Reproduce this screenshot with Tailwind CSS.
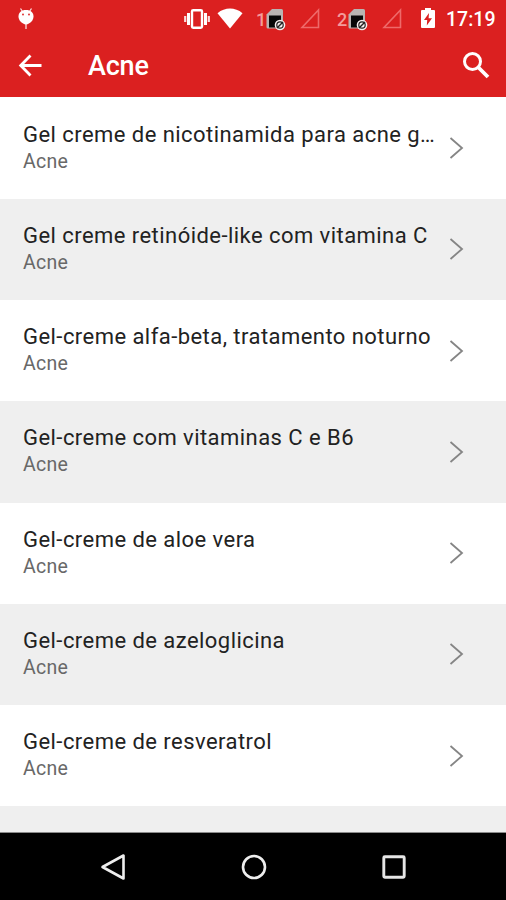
<!DOCTYPE html>
<html lang="pt">
<head>
<meta charset="utf-8">
<title>Acne</title>
<script src="https://cdn.jsdelivr.net/npm/@tailwindcss/browser@4"></script>
</head>
<body class="flex h-[900px] w-[506px] flex-col overflow-hidden bg-black font-['Roboto',sans-serif]">
<header class="h-[97px] shrink-0 bg-[#db2020] text-white">
  <div class="flex h-[37px] items-center pl-[17px] pr-[12px]">
    <svg class="mr-auto h-[23px] w-[18px]" viewBox="0 0 18 23" fill="none"><path d="M3.500 1.500l2 3M14.500 1.500l-2 3M9 16v6" stroke="#fff" stroke-opacity=".85" stroke-width="1.300"/><path d="M9 3C4.300 3 1.500 5.500 1.500 9.500C1.500 13.500 5 17 9 17.500C13 17 16.500 13.500 16.500 9.500C16.500 5.500 13.700 3 9 3z" fill="#fff"/><circle cx="6" cy="7.500" r=".9" fill="#db2020"/><circle cx="12" cy="7.500" r=".9" fill="#db2020"/></svg>
    <svg class="h-[24px] w-[28px]" viewBox="0 0 28 24" fill="none"><rect x="9" y="3.200" width="10" height="17.600" rx="1.200" stroke="#fff" stroke-width="2.400"/><path d="M5.500 6v12M22.500 6v12" stroke="#fff" stroke-width="3"/><path d="M2.200 9v6M25.800 9v6" stroke="#fff" stroke-opacity=".85" stroke-width="2.200"/></svg>
    <svg class="ml-[6px] h-[21px] w-[26px]" viewBox="0 0 26 21"><path d="M.500 5.200C8-1 18-1 25.500 5.200L13 20.500z" fill="#fff"/></svg>
    <span class="ml-[13px] mt-[3px] w-[10px] text-[18px] leading-none font-medium text-[#f49b9b]">1</span>
    <svg class="h-[24px] w-[20px]" viewBox="0 0 20 24"><path d="M6 2h9.500q1.500 0 1.500 1.500V20q0 1.500-1.500 1.500H2Q.500 21.500.500 20V7.500z" fill="#b9b4b2"/><path d="M3 8.500h12v12H3z" fill="#080808"/><circle cx="14" cy="18" r="5.300" fill="#f5eeee"/><circle cx="14" cy="18" r="3.200" fill="none" stroke="#222" stroke-width="1.200"/><path d="M11 21l6-6" stroke="#222" stroke-width="1.500"/></svg>
    <svg class="ml-[14px] h-[21px] w-[20px]" viewBox="0 0 20 21"><path d="M18.500 2v17.500H2z" fill="none" stroke="#ee6a6a" stroke-width="1.600"/></svg>
    <span class="ml-[17px] mt-[3px] w-[10px] text-[18px] leading-none font-medium text-[#f49b9b]">2</span>
    <svg class="ml-px h-[24px] w-[20px]" viewBox="0 0 20 24"><path d="M6 2h9.500q1.500 0 1.500 1.500V20q0 1.500-1.500 1.500H2Q.500 21.500.500 20V7.500z" fill="#b9b4b2"/><path d="M3 8.500h12v12H3z" fill="#080808"/><circle cx="14" cy="18" r="5.300" fill="#f5eeee"/><circle cx="14" cy="18" r="3.200" fill="none" stroke="#222" stroke-width="1.200"/><path d="M11 21l6-6" stroke="#222" stroke-width="1.500"/></svg>
    <svg class="ml-[14px] h-[21px] w-[20px]" viewBox="0 0 20 21"><path d="M18.500 2v17.500H2z" fill="none" stroke="#ee6a6a" stroke-width="1.600"/></svg>
    <svg class="ml-[19px] mb-[2px] h-[22px] w-[14px]" viewBox="0 0 14 22"><path d="M4 1h6v2h3q1 0 1 1v16q0 1-1 1H1q-1 0-1-1V4q0-1 1-1h3z" fill="#fff"/><path d="M8 6L3 13h3.200L5.800 18.500L11 11.200H7.600z" fill="#db2020"/></svg>
    <span class="ml-[11px] mt-[2px] w-[48px] text-[19.500px] leading-none font-medium whitespace-nowrap">17:19</span>
  </div>
  <div class="flex h-[56px] items-center pl-[18px] pr-[16px]">
    <svg class="h-[24px] w-[25px]" viewBox="0 0 25 24"><path d="M23.500 12.500H3M12.500 2.500L2.700 12.500l9.800 10" fill="none" stroke="#fff" stroke-width="2.800"/></svg>
    <h1 class="ml-[45px] mt-[3px] flex-1 text-[27px] leading-none font-medium tracking-[-0.2px]">Acne</h1>
    <svg class="h-[28px] w-[28px]" viewBox="0 0 28 28"><circle cx="10.500" cy="10.500" r="8" fill="none" stroke="#fff" stroke-width="3"/><path d="M16 16l10 10" stroke="#fff" stroke-width="3.800"/></svg>
  </div>
</header>
<main id="list" class="flex h-[736px] shrink-0 flex-col overflow-hidden border-b border-[#8b8b8b] bg-white pt-[0.5px]"></main>
<nav class="flex flex-1 items-center justify-between bg-black pr-[99px] pl-[100px]">
  <svg class="h-[28px] w-[26px]" viewBox="0 0 26 28"><path d="M23.500 2.500v23L2.500 14z" fill="none" stroke="#eee" stroke-width="2.600" stroke-linejoin="round"/></svg>
  <svg class="h-[26px] w-[26px]" viewBox="0 0 26 26"><circle cx="13" cy="13" r="11" fill="none" stroke="#eee" stroke-width="2.600"/></svg>
  <svg class="h-[26px] w-[26px]" viewBox="0 0 26 26"><rect x="2.800" y="2.800" width="20.400" height="20.400" rx="1" fill="none" stroke="#e6e6e6" stroke-width="2.900"/></svg>
</nav>
<script>
const items = [
  ['Gel creme de nicotinamida para acne g…', 'Acne'],
  ['Gel creme retinóide-like com vitamina C', 'Acne'],
  ['Gel-creme alfa-beta, tratamento noturno', 'Acne'],
  ['Gel-creme com vitaminas C e B6', 'Acne'],
  ['Gel-creme de aloe vera', 'Acne'],
  ['Gel-creme de azeloglicina', 'Acne'],
  ['Gel-creme de resveratrol', 'Acne'],
];
document.getElementById('list').innerHTML = items.map(([title, tag]) => `
  <div class="flex h-[101.25px] shrink-0 items-center pl-[23px] pr-[43px] even:bg-[#efefef]">
    <div class="w-[426px] shrink-0 pb-[1px]">
      <div class="text-[22px] leading-[28px] tracking-[0.45px] whitespace-nowrap text-[#222222]">${title}</div>
      <div class="text-[19.500px] leading-[26px] tracking-[0.3px] text-[#686868]">${tag}</div>
    </div>
    <svg class="h-[24px] w-[15px] shrink-0" viewBox="0 0 15 24"><path d="M1.500 2L13 12L1.500 22" fill="none" stroke="#858585" stroke-width="1.800"/></svg>
  </div>`).join('') + '<div class="flex-1 bg-[#efefef]"></div>';
</script>
</body>
</html>
